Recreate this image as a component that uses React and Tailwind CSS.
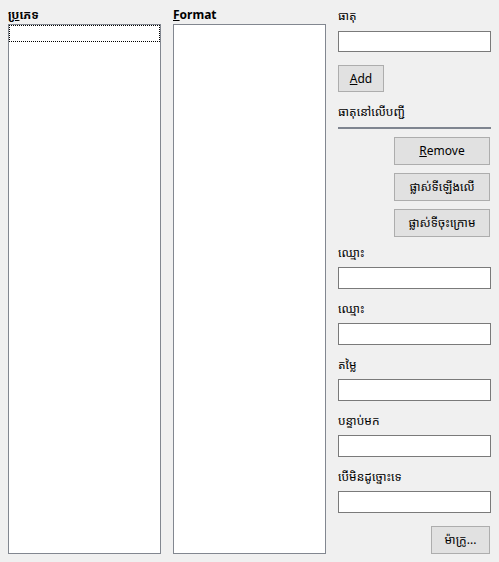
import React from 'react';

const font = { fontFamily: '"Segoe UI", "Noto Sans", "Noto Sans Khmer", "Khmer OS", "DejaVu Sans", sans-serif' };

function Field({ label, first }) {
  return (
    <>
      <div className={`${first ? 'mt-[8px]' : 'mt-[12px]'} h-[16px] leading-[16px] text-[12px] text-black`}>{label}</div>
      <div className="mt-[6px] h-[22px] bg-white border border-[#7a7a7a]" />
    </>
  );
}

function Btn({ children, className = '' }) {
  return (
    <button className={`h-[28px] bg-[#e1e1e1] border border-[#adadad] text-[12px] text-black flex items-center justify-center ${className}`}>
      {children}
    </button>
  );
}

export default function App() {
  return (
    <div className="w-[499px] h-[562px] bg-[#f0f0f0] flex pl-[8px] pt-[6px] pb-[8px] overflow-hidden" style={font}>
      {/* left list */}
      <div className="w-[153px] flex flex-col">
        <div className="h-[18px] leading-[18px] text-[12px] font-bold text-black">
          <span className="underline">ប្</span>រភេទ
        </div>
        <div className="flex-1 bg-white border border-[#828790]">
          <div className="h-[17px] border border-dotted border-black" />
        </div>
      </div>

      {/* format list */}
      <div className="w-[153px] ml-[12px] flex flex-col">
        <div className="h-[18px] leading-[18px] text-[12px] font-bold text-black">
          <span className="underline">F</span>ormat
        </div>
        <div className="flex-1 bg-white border border-[#828790]" />
      </div>

      {/* right column */}
      <div className="w-[153px] ml-[12px] flex flex-col">
        <div className="mt-[2px] h-[16px] leading-[16px] text-[12px] text-black">ធាតុ</div>
        <div className="mt-[7px] h-[21px] bg-white border border-[#7a7a7a]" />
        <Btn className="mt-[13px] w-[46px] !h-[27px]">
          <span><span className="underline">A</span>dd</span>
        </Btn>
        <div className="mt-[12px] h-[16px] leading-[16px] text-[12px] text-black">ធាតុនៅលើបញ្ជី</div>
        <div className="mt-[7px] h-[2px] bg-[#7f8590]" />
        <Btn className="mt-[8px] w-[96px] self-end mr-[1px]">
          <span><span className="underline">R</span>emove</span>
        </Btn>
        <Btn className="mt-[8px] w-[96px] self-end mr-[1px]">ផ្លាស់ទីឡើងលើ</Btn>
        <Btn className="mt-[8px] w-[96px] self-end mr-[1px]">ផ្លាស់ទីចុះក្រោម</Btn>
        <Field label="ឈ្មោះ" first />
        <Field label="ឈ្មោះ" />
        <Field label="តម្លៃ" />
        <Field label="បន្ទាប់មក" />
        <Field label="បើមិនដូច្នោះទេ" />
        <Btn className="mt-[13px] w-[59px] self-end mr-[1px]">ម៉ាក្រូ...</Btn>
      </div>
    </div>
  );
}
